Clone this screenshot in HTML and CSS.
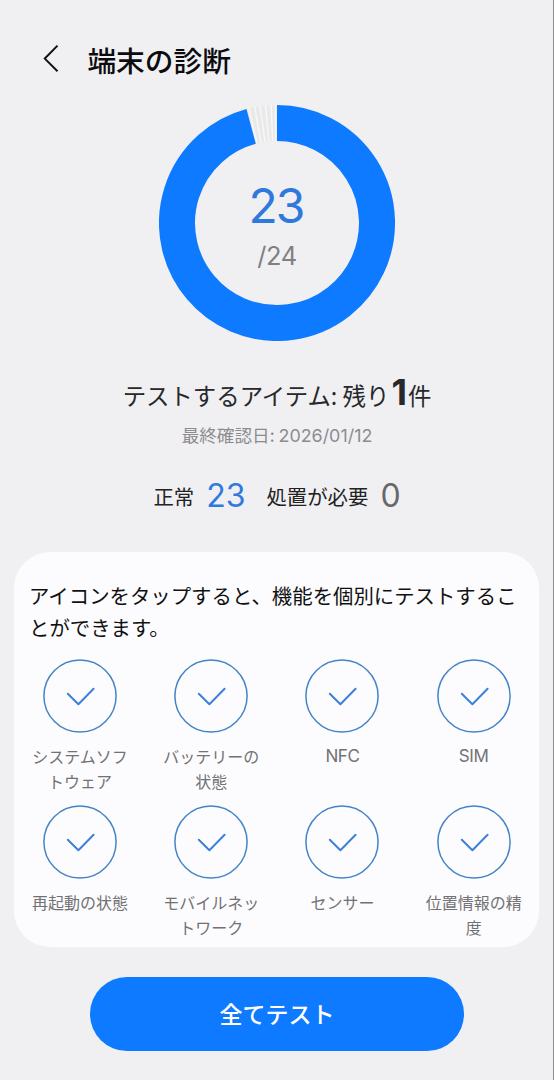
FILE: index.html
```html
<!DOCTYPE html>
<html lang="ja">
<head>
<meta charset="utf-8">
<title>端末の診断</title>
<link rel="stylesheet" href="styles.css">
</head>
<body>
<svg class="defs" aria-hidden="true">
  <symbol id="check" viewBox="0 0 74 74">
    <circle cx="37" cy="37" r="36.1" fill="none" stroke="#4384c6" stroke-width="1.5"/>
    <path d="M24.8 34.8 L35.4 45.2 L50.6 29.8" fill="none" stroke="#3d80d8" stroke-width="2" stroke-linecap="round" stroke-linejoin="round"/>
  </symbol>
</svg>
<div class="screen">
  <header class="header">
    <svg class="back" width="18" height="30" viewBox="0 0 18 30"><path d="M15.5 1.6 L2.8 14.6 L15.5 27.3" fill="none" stroke="#111" stroke-width="2"/></svg>
    <h1 class="title">端末の診断</h1>
  </header>

  <div class="donut">
    <svg class="ring" width="236" height="236" viewBox="0 0 236 236">
      <circle cx="118" cy="118" r="100" fill="none" stroke="#e9e9ea" stroke-width="36"/>
      <g stroke="#f6f6f7" stroke-width="1.6">
        <path d="M116.5 0 L116.8 36"/>
        <path d="M112 0 L113.7 36"/>
        <path d="M106.5 0 L109.8 36"/>
        <path d="M101 0 L106 37"/>
        <path d="M95.5 1 L102 38"/>
        <path d="M89.5 2 L98 38"/>
      </g>
      <path d="M118 18 A100 100 0 1 1 92.12 21.41" fill="none" stroke="#0d7aff" stroke-width="36"/>
    </svg>
    <div class="score">
      <span class="score-value">23</span>
      <span class="score-total">/24</span>
    </div>
  </div>

  <p class="remaining">テストするアイテム: 残り<strong>1</strong>件</p>
  <p class="last-check">最終確認日: <span>2026/01/12</span></p>
  <div class="summary">
    <span>正常</span><b class="ok">23</b><span class="need">処置が必要</span><b class="zero">0</b>
  </div>

  <section class="card">
    <p class="hint">アイコンをタップすると、機能を個別にテストすることができます。</p>
    <div class="grid">
      <div class="item"><svg class="icon"><use href="#check"/></svg><span>システムソフ<br>トウェア</span></div>
      <div class="item"><svg class="icon"><use href="#check"/></svg><span>バッテリーの<br>状態</span></div>
      <div class="item"><svg class="icon"><use href="#check"/></svg><span class="latin">NFC</span></div>
      <div class="item"><svg class="icon"><use href="#check"/></svg><span class="latin">SIM</span></div>
      <div class="item"><svg class="icon"><use href="#check"/></svg><span>再起動の状態</span></div>
      <div class="item"><svg class="icon"><use href="#check"/></svg><span>モバイルネッ<br>トワーク</span></div>
      <div class="item"><svg class="icon"><use href="#check"/></svg><span>センサー</span></div>
      <div class="item"><svg class="icon"><use href="#check"/></svg><span>位置情報の精<br>度</span></div>
    </div>
  </section>

  <button class="test-all">全てテスト</button>
</div>
</body>
</html>
```
FILE: styles.css
```css
* { box-sizing: border-box; margin: 0; padding: 0; }
body {
  background: #f0f0f3;
  font-family: "Noto Sans CJK JP", sans-serif;
  color: #222;
}
.defs { display: none; }
.screen {
  width: 554px;
  height: 1080px;
  box-shadow: inset -1px 0 #8e8e90;
  display: flex;
  flex-direction: column;
  align-items: center;
  overflow: hidden;
}
.header {
  align-self: stretch;
  height: 105px;
  padding: 44px 0 0 42px;
  display: flex;
  gap: 27.4px;
}
.title {
  font-size: 28.7px;
  line-height: 31px;
  font-weight: 500;
  color: #0c0c0e;
}
.donut { display: grid; width: 236px; height: 236px; }
.ring, .score { grid-area: 1 / 1; }
.score {
  display: flex;
  flex-direction: column;
  align-items: center;
  padding-top: 72px;
  font-family: Inter, sans-serif;
}
.score-value { font-size: 48px; line-height: 58px; font-weight: 400; letter-spacing: -2px; margin-left: -2px; color: #2f78dc; }
.score-total { font-size: 25.5px; line-height: 32px; margin-top: 5px; font-weight: 400; letter-spacing: -0.5px; color: #808083; }
.remaining {
  height: 40px;
  margin-top: 33px;
  line-height: 40px;
  font-size: 23.4px;
  color: #28282a;
  white-space: nowrap;
}
.remaining strong { font-family: Inter, sans-serif; font-size: 36px; line-height: 1; font-weight: 700; margin: 0 1px 0 2px; }
.last-check {
  margin-top: 8px;
  height: 26px;
  line-height: 26px;
  font-size: 17.6px;
  color: #8c8c8f;
  white-space: nowrap;
}
.last-check span { font-family: Inter, sans-serif; font-size: 17.9px; }
.summary {
  margin-top: 28px;
  height: 40px;
  display: flex;
  align-items: center;
  font-size: 20.4px;
  line-height: 40px;
  white-space: nowrap;
}
.summary b { font-family: Inter, sans-serif; font-size: 32px; font-weight: 400; margin-left: 12px; }
.ok { color: #3079dd; }
.zero { color: #68686b; }
.need { margin-left: 21px; }
.card {
  width: 525px;
  height: 395px;
  margin-top: 36px;
  margin-right: 1px;
  padding-top: 27px;
  border-radius: 36px;
  background: #fcfcfe;
}
.hint {
  padding-left: 15px;
  width: 507px;
  font-size: 20.4px;
  line-height: 32px;
  color: #111;
}
.grid {
  margin-top: 15.5px;
  margin-left: 0.3px;
  margin-right: -0.3px;
  display: grid;
  grid-template-columns: repeat(4, 1fr);
  grid-auto-rows: 146px;
}
.item {
  display: flex;
  flex-direction: column;
  align-items: center;
  text-align: center;
  font-size: 16px;
  line-height: 25px;
  color: #727275;
}
.icon { width: 74px; height: 74px; margin-bottom: 11.5px; }
.latin { font-family: Inter, sans-serif; font-size: 17px; letter-spacing: -0.4px; }
.test-all {
  width: 374px;
  height: 74px;
  margin-top: 30px;
  border: 0;
  border-radius: 37px;
  background: #0d7aff;
  color: #fff;
  font: 500 23px/72px "Noto Sans CJK JP", sans-serif;
  padding-bottom: 2px;
}
```
